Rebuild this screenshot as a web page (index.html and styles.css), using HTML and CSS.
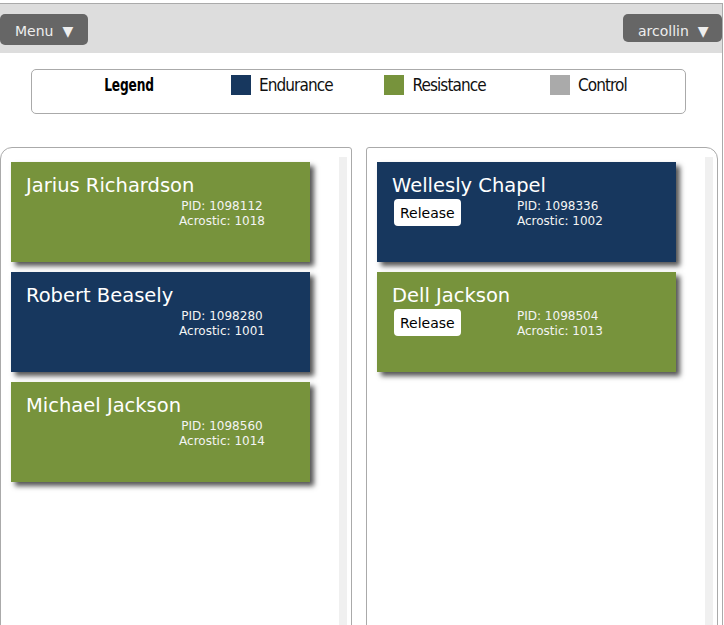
FILE: index.html
```html
<!DOCTYPE html>
<html>
<head>
<meta charset="utf-8">
<link rel="stylesheet" href="styles.css">
</head>
<body>
<div class="page">
  <div class="header">
    <div class="btn menu-btn">Menu<span class="arrow">▼</span></div>
    <div class="btn user-btn">arcollin<span class="arrow">▼</span></div>
  </div>
  <div class="legend">
    <div class="legend-item legend-title">Legend</div>
    <div class="legend-item"><span class="swatch endurance"></span>Endurance</div>
    <div class="legend-item"><span class="swatch resistance"></span>Resistance</div>
    <div class="legend-item"><span class="swatch control"></span>Control</div>
  </div>
  <div class="panels">
    <div class="panel panel-left">
      <div class="list">
        <div class="card resistance">
          <div class="name">Jarius Richardson</div>
          <div class="row"><div class="slot"></div><div class="info centered">PID: 1098112<br>Acrostic: 1018</div></div>
        </div>
        <div class="card endurance">
          <div class="name">Robert Beasely</div>
          <div class="row"><div class="slot"></div><div class="info centered">PID: 1098280<br>Acrostic: 1001</div></div>
        </div>
        <div class="card resistance">
          <div class="name">Michael Jackson</div>
          <div class="row"><div class="slot"></div><div class="info centered">PID: 1098560<br>Acrostic: 1014</div></div>
        </div>
      </div>
      <div class="strip"></div>
    </div>
    <div class="panel panel-right">
      <div class="list">
        <div class="card endurance">
          <div class="name">Wellesly Chapel</div>
          <div class="row"><div class="slot"><button class="release">Release</button></div><div class="info">PID: 1098336<br>Acrostic: 1002</div></div>
        </div>
        <div class="card resistance">
          <div class="name">Dell Jackson</div>
          <div class="row"><div class="slot"><button class="release">Release</button></div><div class="info">PID: 1098504<br>Acrostic: 1013</div></div>
        </div>
      </div>
      <div class="strip"></div>
    </div>
  </div>
</div>
</body>
</html>
```
FILE: styles.css
```css
html, body {
  margin: 0;
  padding: 0;
  background: #fff;
  overflow: hidden;
}
body {
  font-family: "DejaVu Sans", sans-serif;
}
.page {
  margin-top: 3px;
  width: 722px;
  height: 640px;
  border-top: 1px solid #aaa;
  border-right: 1px solid #aaa;
}
.header {
  height: 49px;
  background: #dddddd;
  display: flex;
  justify-content: space-between;
  align-items: flex-start;
  padding-top: 10px;
  box-sizing: border-box;
}
.btn {
  background: #666;
  color: #eee;
  font-size: 14px;
  line-height: 16px;
  border-radius: 5px;
  box-sizing: border-box;
  padding-top: 9px;
  white-space: nowrap;
}
.menu-btn {
  height: 31px;
  width: 88px;
  padding-left: 15px;
}
.user-btn {
  height: 28px;
  width: 99px;
  padding-left: 15px;
}
.arrow {
  margin-left: 9px;
}
.legend {
  margin: 16px 36px 0 31px;
  height: 45px;
  box-sizing: border-box;
  border: 1px solid #aaa;
  border-radius: 5px;
  padding: 5px 20px 0;
  display: grid;
  grid-template-columns: repeat(4, 1fr);
  justify-items: center;
  align-items: start;
  font-family: "DejaVu Sans Condensed", "DejaVu Sans", sans-serif;
  font-stretch: condensed;
  font-size: 17px;
  letter-spacing: -0.9px;
  color: #111;
}
.legend-item {
  display: flex;
  align-items: center;
  gap: 8px;
  height: 20px;
  line-height: 20px;
}
.legend-title {
  font-weight: bold;
  letter-spacing: -0.2px;
  transform: scaleX(0.8);
  color: #000;
}
.swatch {
  width: 20px;
  height: 20px;
  display: block;
}
.endurance { background: #17375e; }
.resistance { background: #77933c; }
.control { background: #aaaaaa; }
.panels {
  margin-top: 33px;
  display: flex;
  gap: 14px;
}
.panel {
  width: 352px;
  height: 520px;
  box-sizing: border-box;
  border: 1px solid #aaa;
  padding-top: 9px;
  display: flex;
}
.panel-left {
  border-radius: 12px 3px 0 0;
}
.panel-right {
  border-radius: 3px 12px 0 0;
}
.list {
  flex: 1;
  padding: 5px 0 0 10px;
}
.strip {
  width: 8px;
  margin-right: 4px;
  background: #f0f0f0;
}
.card {
  width: 299px;
  height: 100px;
  box-sizing: border-box;
  padding: 12px 0 0 15px;
  margin-bottom: 10px;
  color: #fff;
  box-shadow: 4px 4px 5px #555;
}
.name {
  font-size: 19.5px;
  line-height: 23px;
  white-space: nowrap;
}
.row {
  display: flex;
  margin-top: 2px;
}
.slot {
  width: 125px;
  flex: none;
}
.info {
  width: 142px;
  font-size: 12px;
  line-height: 15px;
  white-space: nowrap;
  color: #f4f4f4;
}
.info.centered {
  text-align: center;
}
.release {
  margin: 0 0 0 2px;
  height: 27px;
  padding: 0 6px;
  background: #fff;
  color: #000;
  border: none;
  border-radius: 4px;
  font-family: "DejaVu Sans", sans-serif;
  font-size: 14px;
}
```
